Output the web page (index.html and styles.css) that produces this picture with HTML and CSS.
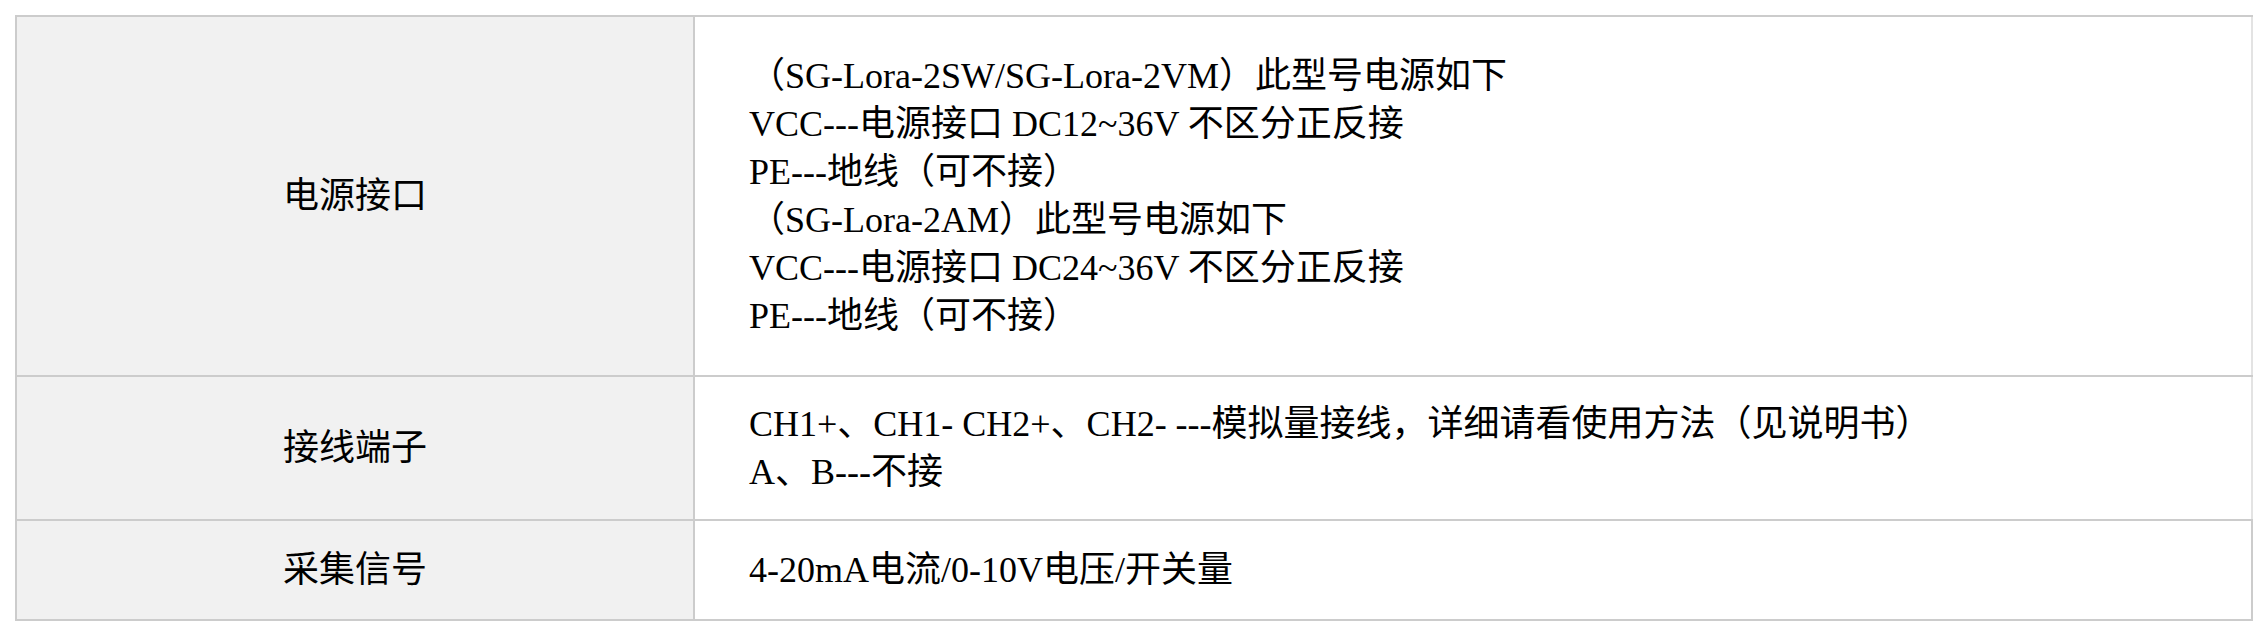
FILE: index.html
```html
<!DOCTYPE html>
<html lang="zh-CN">
<head>
<meta charset="utf-8">
<title>参数</title>
<link rel="stylesheet" href="styles.css">
</head>
<body>
<div class="spec">
  <div class="row row-power">
    <div class="label">电源接口</div>
    <div class="value">
      <div class="line">（SG-Lora-2SW/SG-Lora-2VM）此型号电源如下</div>
      <div class="line">VCC---电源接口 DC12~36V 不区分正反接</div>
      <div class="line">PE---地线（可不接）</div>
      <div class="line">（SG-Lora-2AM）此型号电源如下</div>
      <div class="line">VCC---电源接口 DC24~36V 不区分正反接</div>
      <div class="line">PE---地线（可不接）</div>
    </div>
  </div>
  <div class="row row-terminal">
    <div class="label">接线端子</div>
    <div class="value">
      <div class="line">CH1+、CH1- CH2+、CH2- ---模拟量接线，详细请看使用方法（见说明书）</div>
      <div class="line">A、B---不接</div>
    </div>
  </div>
  <div class="row row-signal last">
    <div class="label">采集信号</div>
    <div class="value">
      <div class="line">4-20mA电流/0-10V电压/开关量</div>
    </div>
  </div>
</div>
</body>
</html>
```
FILE: styles.css
```css
html, body {
  margin: 0;
  padding: 0;
  background: #ffffff;
}

body {
  font-family: "Liberation Serif", "Noto Sans CJK SC", serif;
  font-size: 36px;
  line-height: 48px;
  color: #000000;
}

.spec {
  margin: 15px 0 0 15px;
  width: 2238px;
  box-sizing: border-box;
  border-top: 2px solid #cccccc;
  border-left: 2px solid #cccccc;
  border-bottom: 2px solid #cccccc;
  display: flex;
  flex-direction: column;
}

.row {
  display: grid;
  grid-template-columns: 678px 1fr;
  border-bottom: 2px solid #cccccc;
}

.row.last {
  border-bottom: none;
}

.row-power {
  height: 358px;
}

.row-terminal {
  height: 142px;
}

.row-signal {
  height: 98px;
}

.label {
  background: #f1f1f1;
  border-right: 2px solid #cccccc;
  display: flex;
  align-items: center;
  justify-content: center;
  white-space: nowrap;
}

.value {
  display: flex;
  flex-direction: column;
  justify-content: center;
  padding-left: 54px;
  border-right: 2px solid #e3e3e3;
  white-space: nowrap;
}

.row.last .value {
  border-right-color: #cccccc;
}
```
